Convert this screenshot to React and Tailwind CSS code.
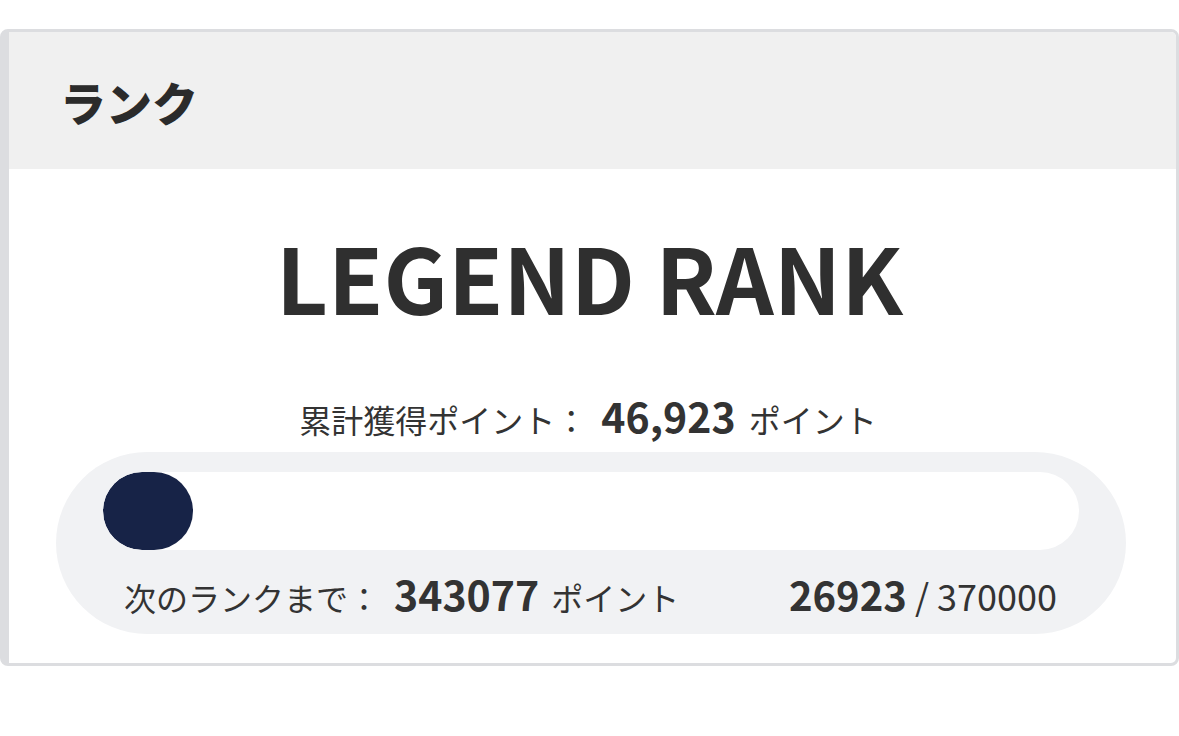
import React from "react";

const font = { fontFamily: '"Noto Sans CJK JP", "Noto Sans", sans-serif' };

export default function App() {
  const current = 26923;
  const total = 370000;

  return (
    <div className="w-[1179px] h-[736px] bg-white pt-[29px]" style={font}>
      {/* カード */}
      <div className="w-[1179px] h-[637px] border-[3px] border-l-[9px] border-[#dcdde0] rounded-lg overflow-hidden flex flex-col bg-white">
        <div className="h-[137px] bg-[#f0f0f0] flex items-center pl-[51px] shrink-0">
          <h2 className="text-[46px] font-black text-[#2b2b2b] leading-none">ランク</h2>
        </div>

        <div className="flex flex-col items-center">
          <h1 className="mt-[62px] mr-[6px] text-[90px] font-bold text-[#2f2f2f] leading-none">
            LEGEND RANK
          </h1>

          <p className="mt-[74px] mr-[9px] text-[32px] text-[#333] leading-none flex items-baseline">
            累計獲得ポイント：
            <span className="text-[41px] font-bold ml-[14px] mr-[13px]">46,923</span>
            ポイント
          </p>

          {/* 進捗バー */}
          <div className="mt-[16px] ml-[-3px] w-[1070px] h-[182px] rounded-full bg-[#f1f2f4] px-[47px] pt-[20px]">
            <div className="h-[78px] rounded-full bg-white overflow-hidden">
              <div
                className="h-full min-w-[90px] rounded-full bg-[#172347]"
                style={{ width: `${(current / total) * 100}%` }}
              />
            </div>
            <div className="flex items-baseline justify-between pl-[21px] pr-[22px] mt-[23px] text-[#333]">
              <p className="text-[32px] flex items-baseline leading-none">
                次のランクまで：
                <span className="text-[41px] font-bold ml-[14px] mr-[12px]">343077</span>
                ポイント
              </p>
              <p className="text-[36px] leading-none">
                <span className="font-bold text-[40px]">26923</span> / 370000
              </p>
            </div>
          </div>
        </div>
      </div>
    </div>
  );
}
